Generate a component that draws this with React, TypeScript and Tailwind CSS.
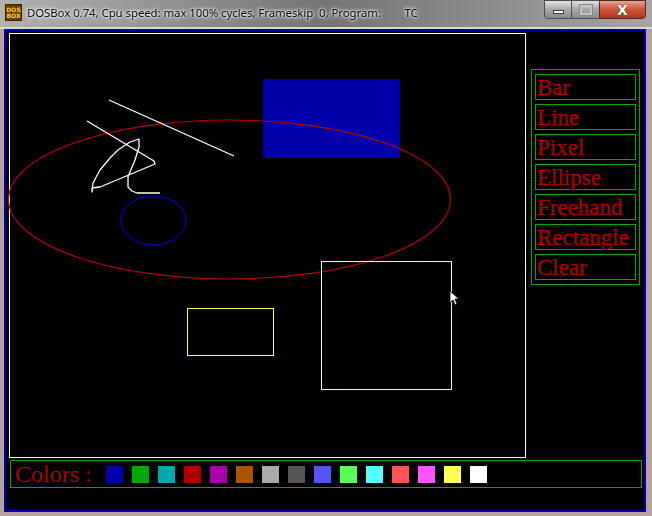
import React from "react";

// EGA palette, indices 1..15 as the program shows them
const PALETTE = [
  "#0000aa",
  "#00aa00",
  "#00aaaa",
  "#aa0000",
  "#aa00aa",
  "#aa5500",
  "#aaaaaa",
  "#555555",
  "#5555ff",
  "#55ff55",
  "#55ffff",
  "#ff5555",
  "#ff55ff",
  "#ffff55",
  "#ffffff",
];

const TOOLS = ["Bar", "Line", "Pixel", "Ellipse", "Freehand", "Rectangle", "Clear"];

// freehand stroke, in page coordinates
const FREEHAND =
  "87,121 154,161 155,164 100,187 92,188 92,192 93,183 100,170 110,158 118,150 130,142 139,139 139,147 135,160 130,172 128,177 128,187 132,191 137,193 160,193";

const TitleBar: React.FC = () => (
  <div className="relative h-[29px] flex items-start bg-gradient-to-r from-[#b2b2b2] via-[#747474] to-[#a6a6a6] border-b-2 border-[#d9d9d9]">
    <div className="mt-[4px] ml-[5px] w-[17px] h-[17px] bg-[#6b3a10] border border-[#3b1e06] flex flex-col items-center justify-center leading-[6px] text-[6px] font-bold text-[#ffd21a] [font-family:'DejaVu_Sans',sans-serif]">
      <span>DOS</span>
      <span>BOX</span>
    </div>
    <span className="ml-[5px] mt-[5px] whitespace-pre text-[11.3px] leading-[16px] text-black [font-family:'Noto_Sans',sans-serif] [text-shadow:0_0_5px_#fff,0_0_3px_#fff,0_0_2px_#eee]">
      {"DOSBox 0.74, Cpu speed: max 100% cycles, Frameskip  0, Program:        TC"}
    </span>
    <div className="ml-auto mr-[6px] flex h-[19px]">
      <div className="w-[28px] h-full rounded-bl-[4px] border border-[#4e4e4e] bg-gradient-to-b from-[#e4e4e4] via-[#a9a9a9] to-[#8a8a8a] flex items-end justify-center pb-[4px]">
        <div className="w-[11px] h-[4px] bg-white border border-[#3d3d3d]" />
      </div>
      <div className="w-[27px] h-full border-y border-[#4e4e4e] bg-gradient-to-b from-[#e0e0e0] via-[#a7a7a7] to-[#8c8c8c] flex items-center justify-center">
        <div className="w-[12px] h-[10px] border-2 border-[#c4c4c4] outline outline-1 outline-[#8a8a8a]" />
      </div>
      <div className="w-[47px] h-full rounded-br-[4px] border border-[#4e2a22] bg-gradient-to-b from-[#e8a493] via-[#cc5236] to-[#b8341a] flex items-center justify-center">
        <span className="text-[14px] leading-none font-bold text-white [font-family:'DejaVu_Sans',sans-serif] [text-shadow:0_0_1px_#333,0_0_1px_#333]">
          X
        </span>
      </div>
    </div>
  </div>
);

const Drawing: React.FC = () => (
  <svg
    className="absolute left-[-1px] top-[-1px] overflow-visible"
    width={517}
    height={425}
    viewBox="9 33 517 425"
  >
    <rect x={263} y={79} width={137} height={79} fill="#0000aa" shapeRendering="crispEdges" />
    <ellipse cx={229.5} cy={199.5} rx={221} ry={79.5} fill="none" stroke="#bb0000" strokeWidth={1.2} />
    <ellipse cx={153.5} cy={220.5} rx={32.5} ry={24.5} fill="none" stroke="#0000bb" strokeWidth={1.2} />
    <line x1={109} y1={100} x2={234} y2={156} stroke="#ffffff" strokeWidth={1.3} />
    <polyline points={FREEHAND} fill="none" stroke="#ffffff" strokeWidth={1.3} strokeLinejoin="round" />
    <rect x={187.5} y={308.5} width={86} height={47} fill="none" stroke="#ffff55" strokeWidth={1} shapeRendering="crispEdges" />
    <rect x={321.5} y={261.5} width={130} height={128} fill="none" stroke="#ffffa8" strokeWidth={1} shapeRendering="crispEdges" />
    <polygon
      points="450,291 450,303 453,300 455,305 457,304 455,299 459,299"
      fill="#ffffff"
      stroke="#000000"
      strokeWidth={0.8}
    />
  </svg>
);

const App: React.FC = () => {
  return (
    <div className="w-[652px] h-[516px] overflow-hidden bg-[#b7a29d]">
      <TitleBar />

      {/* DOS screen */}
      <div className="ml-[4px] w-[642px] h-[483px] border-2 border-[#0000b4] bg-black [font-family:'Liberation_Serif',serif]">
        <div className="pl-[3px] pt-[2px] flex flex-col">
          <div className="flex items-start">
            {/* drawing canvas */}
            <div className="relative w-[517px] h-[425px] border border-white">
              <Drawing />
            </div>

            {/* tool list */}
            <div className="ml-[5px] mt-[36px] w-[109px] border border-[#00aa00] px-[3px] py-[4px] flex flex-col gap-[4px]">
              {TOOLS.map((t) => (
                <div
                  key={t}
                  className="w-[101px] h-[26px] border border-[#00aa00] pl-[1px] text-[23px] leading-[25px] text-[#aa0000] whitespace-nowrap [-webkit-text-stroke:0.3px_#aa0000]"
                >
                  {t}
                </div>
              ))}
            </div>
          </div>

          {/* colour bar */}
          <div className="ml-[1px] mt-[2px] w-[632px] h-[28px] border border-[#00aa00] flex items-center">
            <span className="w-[95px] pl-[4px] text-[24px] leading-[26px] text-[#aa0000] whitespace-pre">
              {"Colors :"}
            </span>
            <div className="flex gap-[9px]">
              {PALETTE.map((c) => (
                <div key={c} className="w-[17px] h-[17px]" style={{ backgroundColor: c }} />
              ))}
            </div>
          </div>
        </div>
      </div>
    </div>
  );
};

export default App;
